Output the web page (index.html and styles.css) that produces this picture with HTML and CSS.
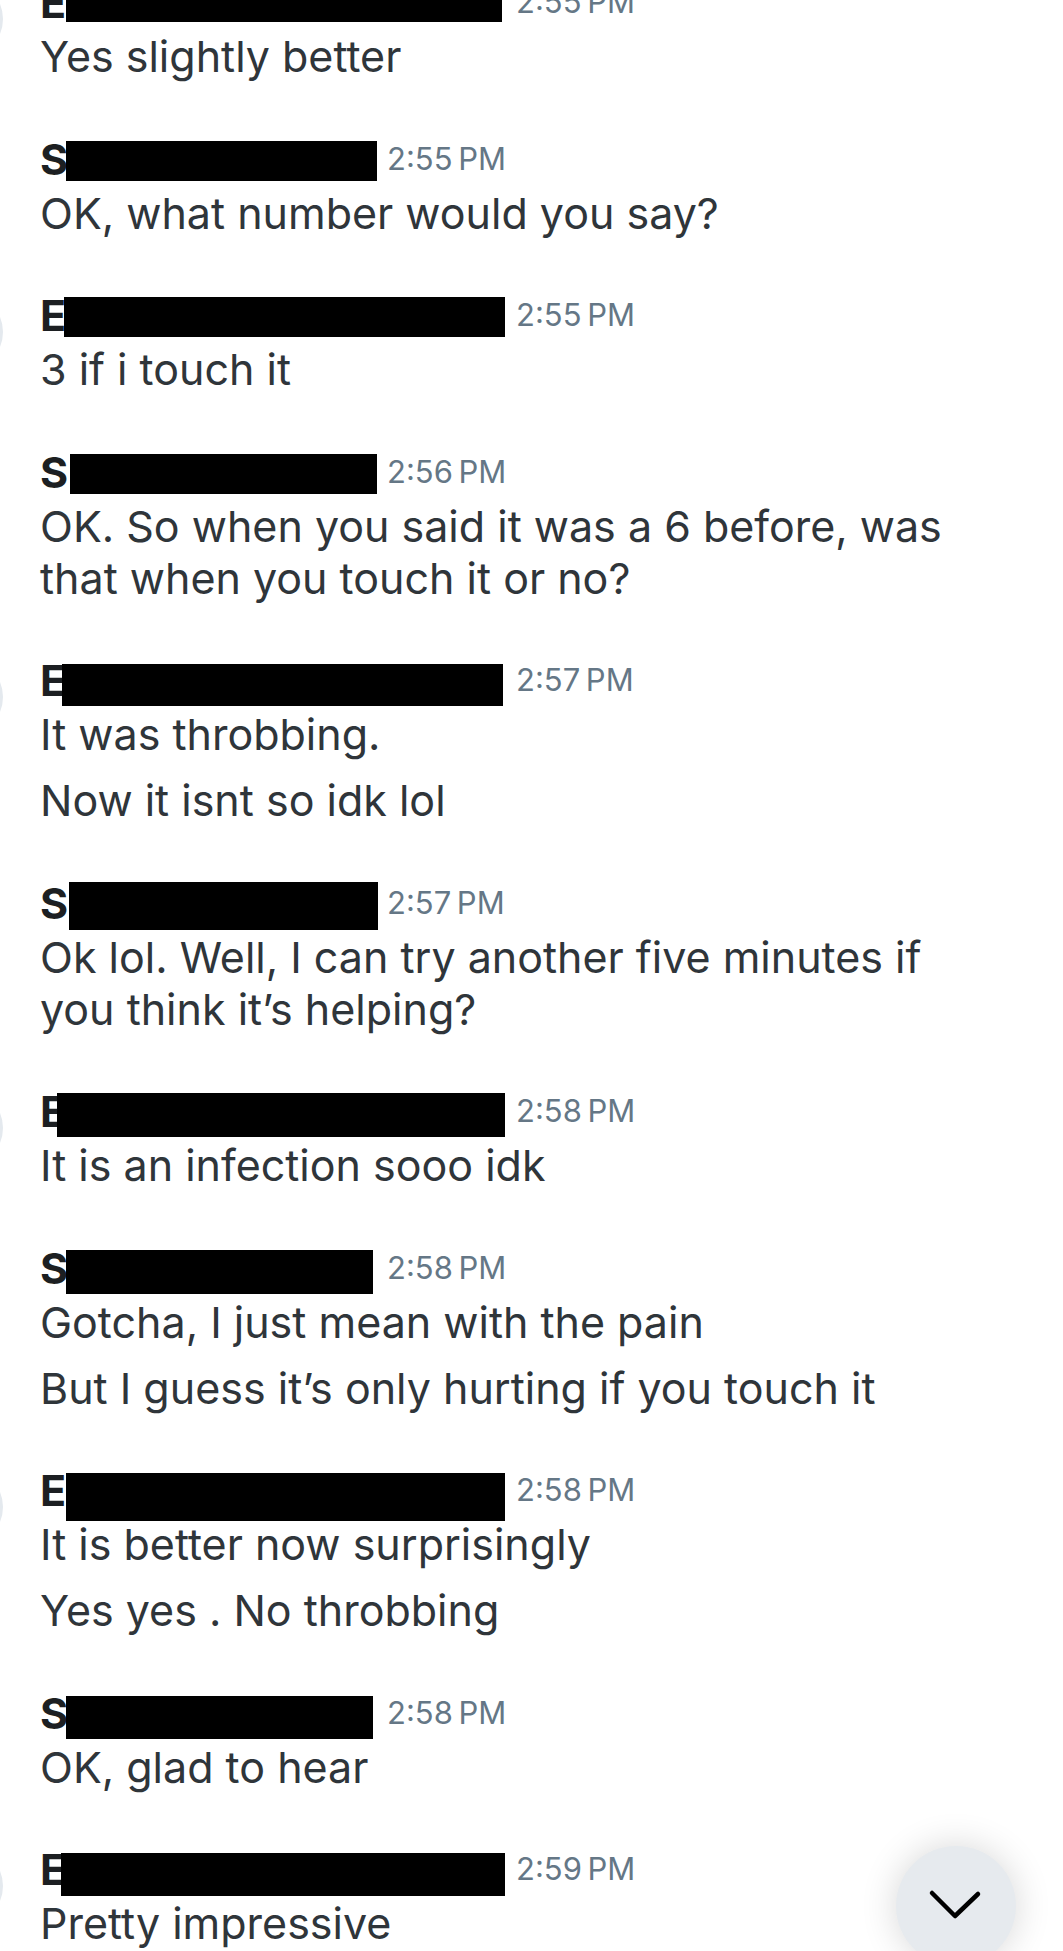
FILE: index.html
```html
<!DOCTYPE html>
<html lang="en">
<head>
<meta charset="utf-8">
<title>Messages</title>
<link rel="stylesheet" href="styles.css">
</head>
<body>
<main class="thread">
  <section class="group">
    <div class="head"><span class="avatar"></span><span class="name name-e">E</span><span class="redact rx-e1"></span><span class="time">2:55&#8239;PM</span></div>
    <p class="msg">Yes slightly better</p>
  </section>
  <section class="group">
    <div class="head"><span class="name name-s">S</span><span class="redact rx-s1"></span><span class="time">2:55&#8239;PM</span></div>
    <p class="msg">OK, what number would you say?</p>
  </section>
  <section class="group">
    <div class="head"><span class="avatar"></span><span class="name name-e">E</span><span class="redact rx-e2"></span><span class="time">2:55&#8239;PM</span></div>
    <p class="msg">3 if i touch it</p>
  </section>
  <section class="group">
    <div class="head"><span class="name name-s">S</span><span class="redact rx-s2"></span><span class="time">2:56&#8239;PM</span></div>
    <p class="msg">OK. So when you said it was a 6 before, was that when you touch it or no?</p>
  </section>
  <section class="group">
    <div class="head"><span class="avatar"></span><span class="name name-e">E</span><span class="redact rx-e3"></span><span class="time">2:57&#8239;PM</span></div>
    <p class="msg">It was throbbing.</p>
    <p class="msg">Now it isnt so idk lol</p>
  </section>
  <section class="group">
    <div class="head"><span class="name name-s">S</span><span class="redact rx-s3"></span><span class="time">2:57&#8239;PM</span></div>
    <p class="msg">Ok lol. Well, I can try another five minutes if you think it’s helping?</p>
  </section>
  <section class="group">
    <div class="head"><span class="avatar"></span><span class="name name-e">E</span><span class="redact rx-e4"></span><span class="time">2:58&#8239;PM</span></div>
    <p class="msg">It is an infection sooo idk</p>
  </section>
  <section class="group">
    <div class="head"><span class="name name-s">S</span><span class="redact rx-s4"></span><span class="time">2:58&#8239;PM</span></div>
    <p class="msg">Gotcha, I just mean with the pain</p>
    <p class="msg">But I guess it’s only hurting if you touch it</p>
  </section>
  <section class="group">
    <div class="head"><span class="avatar"></span><span class="name name-e">E</span><span class="redact rx-e5"></span><span class="time">2:58&#8239;PM</span></div>
    <p class="msg">It is better now surprisingly</p>
    <p class="msg">Yes yes . No throbbing</p>
  </section>
  <section class="group">
    <div class="head"><span class="name name-s">S</span><span class="redact rx-s5"></span><span class="time">2:58&#8239;PM</span></div>
    <p class="msg">OK, glad to hear</p>
  </section>
  <section class="group">
    <div class="head"><span class="avatar"></span><span class="name name-e">E</span><span class="redact rx-e6"></span><span class="time">2:59&#8239;PM</span></div>
    <p class="msg">Pretty impressive</p>
  </section>
</main>
<button class="scroll-down" type="button" aria-label="Scroll to bottom">
  <svg width="120" height="120" viewBox="0 0 120 120" aria-hidden="true">
    <polyline points="36,47 59,70 82,48" fill="none" stroke="#000" stroke-width="4.5" stroke-linecap="round" stroke-linejoin="round"/>
  </svg>
</button>
</body>
</html>
```

FILE: styles.css
```css
html, body {
  margin: 0;
  padding: 0;
  background: #ffffff;
}

body {
  height: 1951px;
  overflow: hidden;
  font-family: Inter, "Liberation Sans", Arial, sans-serif;
  color: #2f353a;
}

.thread {
  margin-top: -20px;
  padding: 0 40px;
  display: flex;
  flex-direction: column;
  gap: 46.5px;
}

.group {
  display: flex;
  flex-direction: column;
}

.head {
  position: relative;
  display: flex;
  align-items: flex-start;
  height: 44px;
}

.name {
  font-weight: 700;
  font-size: 43px;
  line-height: 44px;
  color: #1c1f22;
}

.name-s { width: 347px; }
.name-e { width: 476px; }

.time {
  font-size: 31px;
  line-height: 44px;
  color: #657786;
  white-space: nowrap;
}

.redact {
  position: absolute;
  background: #000;
}

.rx-e1 { left: 26px; width: 436px; top: 2px; height: 40px; }
.rx-s1 { left: 26px; width: 311px; top: 4px; height: 40px; }
.rx-e2 { left: 24px; width: 441px; top: 4px; height: 40px; }
.rx-s2 { left: 30px; width: 307px; top: 4px; height: 40px; }
.rx-e3 { left: 22px; width: 441px; top: 6px; height: 42px; }
.rx-s3 { left: 29px; width: 309px; top: 1px; height: 48px; }
.rx-e4 { left: 17px; width: 448px; top: 4px; height: 44px; }
.rx-s4 { left: 26px; width: 307px; top: 4px; height: 44px; }
.rx-e5 { left: 26px; width: 439px; top: 5px; height: 48px; }
.rx-s5 { left: 26px; width: 307px; top: 5px; height: 43px; }
.rx-e6 { left: 21px; width: 444px; top: 6px; height: 43px; }

.avatar {
  position: absolute;
  left: -115px;
  top: 0;
  width: 78px;
  height: 78px;
  border-radius: 50%;
  background: #e4e9ee;
}

.msg {
  margin: 0;
  padding: 6px 0 8px;
  max-width: 960px;
  font-size: 43px;
  line-height: 52px;
  color: #2f353a;
}

.scroll-down {
  position: fixed;
  left: 896px;
  top: 1846px;
  width: 120px;
  height: 120px;
  padding: 0;
  border: none;
  border-radius: 50%;
  background: #e6eaee;
  box-shadow: 0 0 36px rgba(0, 0, 0, 0.16);
  display: flex;
  align-items: center;
  justify-content: center;
}
```
